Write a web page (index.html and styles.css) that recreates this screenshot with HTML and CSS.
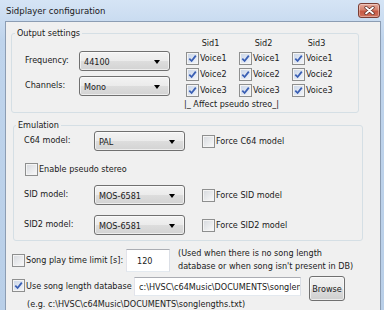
FILE: index.html
```html
<!DOCTYPE html>
<html lang="en">

<head>
    <meta charset="UTF-8">
    <title>Sidplayer configuration</title>
    <link rel="stylesheet" href="styles.css">
</head>

<body>
    <div class="window">
        <div class="titlebar">
            <span class="title">Sidplayer configuration</span>
            <span class="close-btn">
                <svg width="11" height="9" viewBox="0 0 11 9">
                    <path d="M2 1.5 L9 7.5 M9 1.5 L2 7.5" stroke="#5a2a25" stroke-width="3.2" stroke-linecap="round" />
                    <path d="M2 1.5 L9 7.5 M9 1.5 L2 7.5" stroke="#ffffff" stroke-width="1.8" stroke-linecap="round" />
                </svg>
            </span>
        </div>

        <div class="client">
            <!-- Output settings -->
            <fieldset class="group output">
                <legend>Output settings</legend>
                <div class="output-body">
                    <div class="output-left">
                        <div class="field-row">
                            <span class="field-label">Frequency:</span>
                            <div class="combo"><span>44100</span><i class="arrow"></i></div>
                        </div>
                        <div class="field-row">
                            <span class="field-label">Channels:</span>
                            <div class="combo"><span>Mono</span><i class="arrow"></i></div>
                        </div>
                    </div>
                    <div class="voices">
                        <div class="voice-grid">
                            <div class="sid-head">Sid1</div>
                            <div class="sid-head">Sid2</div>
                            <div class="sid-head">Sid3</div>
                            <label class="cb"><span class="box checked"><svg width="11" height="11"><path d="M2.3 5.6 L4.6 8 L8.8 2.6" fill="none" stroke="#3a5fb4" stroke-width="1.8" /></svg></span>Voice1</label>
                            <label class="cb"><span class="box checked"><svg width="11" height="11"><path d="M2.3 5.6 L4.6 8 L8.8 2.6" fill="none" stroke="#3a5fb4" stroke-width="1.8" /></svg></span>Voice1</label>
                            <label class="cb"><span class="box checked"><svg width="11" height="11"><path d="M2.3 5.6 L4.6 8 L8.8 2.6" fill="none" stroke="#3a5fb4" stroke-width="1.8" /></svg></span>Voice1</label>
                            <label class="cb"><span class="box checked"><svg width="11" height="11"><path d="M2.3 5.6 L4.6 8 L8.8 2.6" fill="none" stroke="#3a5fb4" stroke-width="1.8" /></svg></span>Voice2</label>
                            <label class="cb"><span class="box checked"><svg width="11" height="11"><path d="M2.3 5.6 L4.6 8 L8.8 2.6" fill="none" stroke="#3a5fb4" stroke-width="1.8" /></svg></span>Voice2</label>
                            <label class="cb"><span class="box checked"><svg width="11" height="11"><path d="M2.3 5.6 L4.6 8 L8.8 2.6" fill="none" stroke="#3a5fb4" stroke-width="1.8" /></svg></span>Vocie2</label>
                            <label class="cb"><span class="box checked"><svg width="11" height="11"><path d="M2.3 5.6 L4.6 8 L8.8 2.6" fill="none" stroke="#3a5fb4" stroke-width="1.8" /></svg></span>Voice3</label>
                            <label class="cb"><span class="box checked"><svg width="11" height="11"><path d="M2.3 5.6 L4.6 8 L8.8 2.6" fill="none" stroke="#3a5fb4" stroke-width="1.8" /></svg></span>Voice3</label>
                            <label class="cb"><span class="box checked"><svg width="11" height="11"><path d="M2.3 5.6 L4.6 8 L8.8 2.6" fill="none" stroke="#3a5fb4" stroke-width="1.8" /></svg></span>Voice3</label>
                        </div>
                        <div class="affect">|_ Affect pseudo streo_|</div>
                    </div>
                </div>
            </fieldset>

            <!-- Emulation -->
            <fieldset class="group emulation">
                <legend>Emulation</legend>
                <div class="emu-row first">
                    <span class="emu-label">C64 model:</span>
                    <div class="combo"><span>PAL</span><i class="arrow"></i></div>
                    <label class="cb force"><span class="box"></span>Force C64 model</label>
                </div>
                <div class="emu-row pseudo">
                    <label class="cb"><span class="box"></span>Enable pseudo stereo</label>
                </div>
                <div class="emu-row sid">
                    <span class="emu-label">SID model:</span>
                    <div class="combo"><span>MOS-6581</span><i class="arrow"></i></div>
                    <label class="cb force"><span class="box"></span>Force SID model</label>
                </div>
                <div class="emu-row sid2">
                    <span class="emu-label">SID2 model:</span>
                    <div class="combo"><span>MOS-6581</span><i class="arrow"></i></div>
                    <label class="cb force"><span class="box"></span>Force SID2 model</label>
                </div>
            </fieldset>

            <!-- Song length -->
            <div class="time-row">
                <label class="cb time-cb"><span class="box"></span>Song play time limit [s]:</label>
                <input type="text" class="textbox time-input" value="120">
                <div class="note">(Used when there is no song length<br>database or when song isn't present in DB)</div>
            </div>
            <div class="db-row">
                <label class="cb db-cb"><span class="box checked"><svg width="11" height="11"><path d="M2.3 5.6 L4.6 8 L8.8 2.6" fill="none" stroke="#3a5fb4" stroke-width="1.8" /></svg></span>Use song length database</label>
                <input type="text" class="textbox db-input" value="c:\HVSC\c64Music\DOCUMENTS\songlengths.txt">
                <button class="browse">Browse</button>
            </div>
            <div class="example">(e.g. c:\HVSC\c64Music\DOCUMENTS\songlengths.txt)</div>
        </div>
    </div>
</body>

</html>
```

FILE: styles.css
```css
/* Basic reset */
* {
    box-sizing: border-box;
    margin: 0;
    padding: 0;
}

body {
    width: 384px;
    height: 310px;
    overflow: hidden;
    font-family: "DejaVu Sans Condensed", "DejaVu Sans", sans-serif;
    font-size: 9px;
    color: #1a1a1a;
}

.window {
    height: 310px;
    display: flex;
    flex-direction: column;
    background: linear-gradient(#d5e4f5, #bfd4ec 40px, #b9cfe8);
}

.titlebar {
    height: 21px;
    display: flex;
    align-items: center;
    justify-content: space-between;
    padding: 0 4px 1px 6px;
}

.title {
    font-size: 9.5px;
}

.close-btn {
    width: 22px;
    height: 15px;
    border: 1px solid #7a3d34;
    border-radius: 3px;
    background: linear-gradient(#e6a99b, #d5836f 45%, #c75843 55%, #cf705a);
    box-shadow: inset 0 0 0 1px rgba(255, 255, 255, 0.35);
    display: flex;
    align-items: center;
    justify-content: center;
}

.client {
    flex: 1;
    margin: 0 3px 0 5px;
    background-color: #f0f0f0;
    border: 1px solid #8c9db3;
    border-bottom: none;
}

/* group boxes */
fieldset {
    border: 1px solid #d5dfe5;
    border-radius: 3px;
    padding: 0;
}

legend {
    padding: 0 2px;
    line-height: 12px;
}

.output {
    width: 348px;
    margin: 5px 0 0 5px;
}

.output legend {
    margin-left: 3px;
}

.output-body {
    display: flex;
    padding-bottom: 2px;
}

.output-left {
    margin-left: 13px;
    padding-top: 12px;
    display: flex;
    flex-direction: column;
    gap: 5px;
}

.field-row {
    display: flex;
    align-items: center;
}

.field-label {
    width: 54px;
    margin-top: -3px;
}

/* combo boxes */
.combo {
    width: 91px;
    height: 20px;
    border: 1px solid #707070;
    border-radius: 3px;
    background: linear-gradient(#f3f3f3, #ebebeb 50%, #dddddd 51%, #d3d3d3);
    box-shadow: inset 0 0 0 1px rgba(255, 255, 255, 0.6);
    display: flex;
    align-items: center;
    justify-content: space-between;
    padding: 2px 9px 0 4px;
}

.arrow {
    width: 0;
    height: 0;
    border-left: 3.5px solid transparent;
    border-right: 3.5px solid transparent;
    border-top: 4px solid #000;
    margin-top: -1px;
}

.voices {
    margin-left: 14px;
    margin-top: -2px;
}

.voice-grid {
    display: grid;
    grid-template-columns: repeat(3, 53px);
    grid-template-rows: 12px 16px 16px 16px;
}

.sid-head {
    text-align: center;
    line-height: 12px;
}

.voice-grid .cb {
    padding-left: 2px;
    margin-top: 2px;
}

.affect {
    line-height: 12px;
    margin-top: 1px;
}

/* checkboxes */
.cb {
    display: flex;
    align-items: center;
    gap: 1px;
    white-space: nowrap;
}

.box {
    width: 13px;
    height: 13px;
    flex: none;
    border: 1px solid #8e8f8f;
    background: linear-gradient(135deg, #d6d9de, #fafafa);
    box-shadow: inset 0 0 0 1px #f4f4f4;
}

.box svg {
    display: block;
}

.box.checked {
    background: linear-gradient(135deg, #c8d4e7, #f4f6fa);
}

/* emulation */
.emulation {
    width: 350px;
    margin: 6px 0 0 7px;
    padding-bottom: 5px;
}

.emulation legend {
    margin-left: 2px;
}

.emu-row {
    display: flex;
    align-items: center;
    padding-left: 10px;
}

.emu-label {
    width: 70px;
    margin-top: -2px;
}

.emu-row .force {
    margin-left: 17px;
}

.pseudo {
    height: 16px;
    margin-top: 10px;
    padding-left: 11px;
}

.sid {
    margin-top: 8px;
}

.sid2 {
    margin-top: 10px;
}

/* song length rows */
.textbox {
    font-family: inherit;
    font-size: 9px;
    color: #1a1a1a;
    background-color: #fff;
    border: 1px solid #abadb3;
    border-color: #abadb3 #dbdfe6 #e3e9ef #e2e3ea;
    padding: 1px 0 0 4px;
    outline: none;
}

.time-row {
    display: flex;
    align-items: center;
    height: 24px;
    margin: 7px 0 0 6px;
}

.time-cb {
    width: 114px;
}

.time-input {
    width: 44px;
    height: 23px;
    padding-left: 10px;
}

.note {
    margin-left: 8px;
    line-height: 13px;
}

.db-row {
    display: flex;
    align-items: flex-start;
    margin: 4px 0 0 6px;
}

.db-cb {
    width: 122px;
    margin-top: 3px;
}

.db-input {
    width: 167px;
    height: 19px;
    margin-top: 1px;
}

.browse {
    width: 36px;
    height: 25px;
    margin-left: 8px;
    font-family: inherit;
    font-size: 9px;
    color: #1a1a1a;
    border: 1px solid #707070;
    border-radius: 3px;
    background: linear-gradient(#f2f2f2, #ebebeb 50%, #dddddd 51%, #cfcfcf);
    box-shadow: inset 0 0 0 1px rgba(255, 255, 255, 0.6);
}

.example {
    margin: -3px 0 0 21px;
    line-height: 12px;
}
```
